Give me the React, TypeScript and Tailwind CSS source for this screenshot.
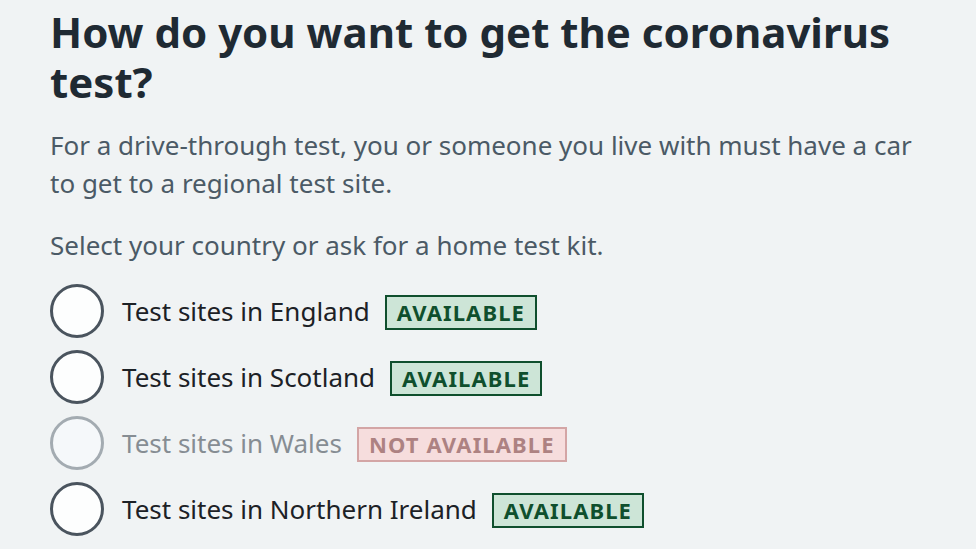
import React from "react";

type Option = {
  label: string;
  available: boolean;
};

const options: Option[] = [
  { label: "Test sites in England", available: true },
  { label: "Test sites in Scotland", available: true },
  { label: "Test sites in Wales", available: false },
  { label: "Test sites in Northern Ireland", available: true },
];

const Badge = ({ available }: { available: boolean }) =>
  available ? (
    <span className="border-2 border-[#0f4f2d] bg-[#cde5d7] px-[10px] h-[35px] flex items-center text-[22px] font-bold tracking-[0.05em] text-[#0f4f2d]">
      AVAILABLE
    </span>
  ) : (
    <span className="border-2 border-[#d3a5a5] bg-[#f6dddd] px-[10px] h-[35px] flex items-center text-[22px] font-bold tracking-[0.05em] text-[#ad8282]">
      NOT AVAILABLE
    </span>
  );

export default function App() {
  return (
    <div className="min-h-screen w-full bg-[#f0f3f4] pl-[50px] pr-[30px] pt-[7px] font-['Noto_Sans',sans-serif]">
      <h1 className="text-[42px] leading-[50px] font-bold text-[#1f2a33]">
        How do you want to get the coronavirus test?
      </h1>
      <p className="mt-[19px] max-w-[890px] text-[26px] leading-[38px] text-[#4b5a66]">
        For a drive-through test, you or someone you live with must have a car to get to a regional test site.
      </p>
      <p className="mt-[24px] text-[26px] leading-[38px] text-[#4b5a66]">
        Select your country or ask for a home test kit.
      </p>
      <div className="mt-[20px] flex flex-col gap-[12px]">
        {options.map((o) => (
          <div key={o.label} className="flex items-center h-[54px]">
            <span
              className={
                o.available
                  ? "w-[54px] h-[54px] rounded-full border-[3px] border-[#4a545e] bg-[#fdfefe]"
                  : "w-[54px] h-[54px] rounded-full border-[3px] border-[#a3abb1] bg-[#f5f8fa]"
              }
            />
            <span
              className={
                o.available
                  ? "ml-[18px] text-[26px] text-[#1c2126]"
                  : "ml-[18px] text-[26px] text-[#868d93]"
              }
            >
              {o.label}
            </span>
            <span className="ml-[15px] mt-[3px]">
              <Badge available={o.available} />
            </span>
          </div>
        ))}
      </div>
    </div>
  );
}
